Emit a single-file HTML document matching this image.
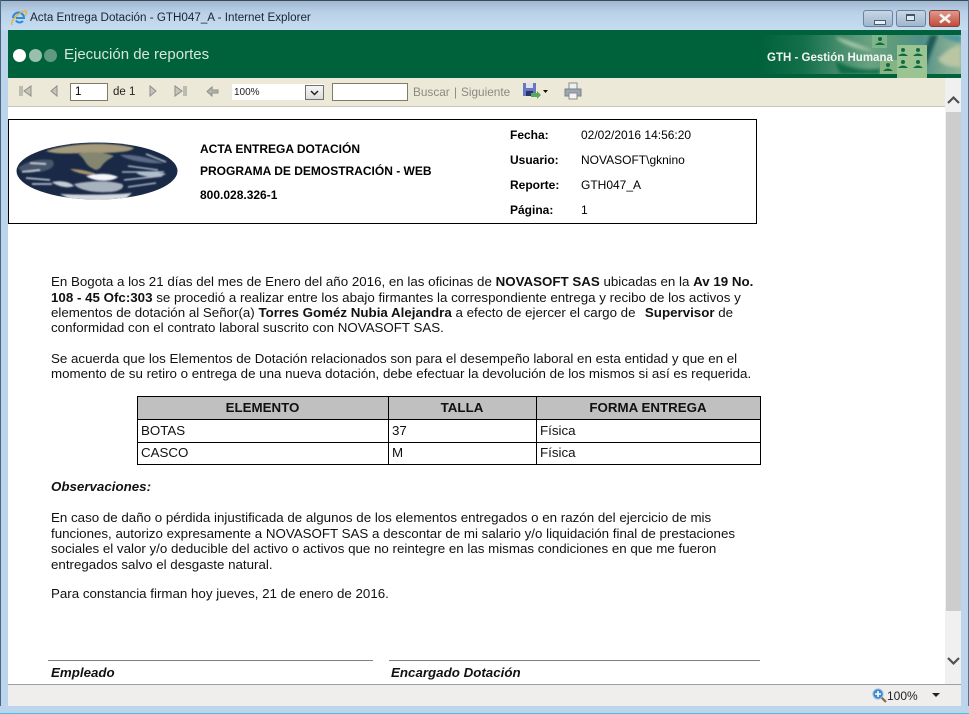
<!DOCTYPE html>
<html><head><meta charset="utf-8">
<style>
html,body{margin:0;padding:0;width:969px;height:714px;overflow:hidden;background:#fff}
body{position:relative;font-family:"Liberation Sans",Arial,sans-serif;color:#000}
.a{position:absolute}
.t{position:absolute;white-space:nowrap;line-height:16px}
.b{font-weight:bold}
.h{font-size:12px}
.p{font-size:13.33px;color:#111}
.g{font-size:11.8px;color:#8a8a80}
</style></head>
<body>
<!-- window frame -->
<div class="a" style="left:0;top:0;width:969px;height:30px;background:linear-gradient(#9db4cc,#b9d1e8 40%,#c6dcf0)"></div>
<div class="a" style="left:0;top:0;width:969px;height:1px;background:#3a4a58"></div>
<div class="a" style="left:0;top:30px;width:8px;height:684px;background:#bcd5ec"></div>
<div class="a" style="left:0;top:0;width:1px;height:714px;background:#4a6880"></div>
<div class="a" style="left:961px;top:30px;width:8px;height:684px;background:#bcd5ec"></div>
<div class="a" style="left:968px;top:0;width:1px;height:714px;background:#4a7890"></div>
<div class="a" style="left:0;top:706px;width:969px;height:8px;background:#bcd5ec"></div>
<div class="a" style="left:0;top:713px;width:969px;height:1px;background:#46c0e0"></div>

<!-- IE icon -->
<svg class="a" style="left:10px;top:9px" width="18" height="18" viewBox="0 0 18 18">
<path d="M3 9a5.500 5.500 0 0 1 11 0H6M6 11.500c1.500 2.500 5 2.500 7 .5" fill="none" stroke="#2f8ad8" stroke-width="2"/>
<path d="M2 16C0 12 9 3 15 2c2 0 2 2 0 5" fill="none" stroke="#e0b040" stroke-width="1.300"/>
</svg>
<div class="t" style="left:30px;top:10px;font-size:11.65px;color:#1a2530">Acta Entrega Dotación - GTH047_A - Internet Explorer</div>

<!-- window buttons -->
<div class="a" style="left:863px;top:10px;width:30px;height:17px;box-sizing:border-box;border:1px solid #6d8299;border-radius:3px;background:linear-gradient(#c6d6e6,#9fb6cc)"></div>
<div class="a" style="left:874px;top:20px;width:10px;height:3px;background:#e8f0f6;border:1px solid #4a5e72"></div>
<div class="a" style="left:896px;top:10px;width:30px;height:17px;box-sizing:border-box;border:1px solid #6d8299;border-radius:3px;background:linear-gradient(#c6d6e6,#9fb6cc)"></div>
<div class="a" style="left:906px;top:14px;width:9px;height:7px;box-sizing:border-box;border:1px solid #42566a;border-top-width:2px;background:#dce8f2"></div>
<div class="a" style="left:929px;top:10px;width:31px;height:17px;box-sizing:border-box;border:1px solid #8a4038;border-radius:3px;background:linear-gradient(#e09a8c,#c04c3c)"></div>
<svg class="a" style="left:938px;top:13px" width="14" height="11" viewBox="0 0 14 11"><path d="M2 1.500L12 9.500M12 1.500L2 9.500" stroke="#f4f4f4" stroke-width="2.600"/></svg>

<!-- green banner -->
<div class="a" style="left:8px;top:30px;width:953px;height:48px;background:#00623a;overflow:hidden">
  <div class="a" style="left:752px;top:5px;width:201px;height:39px;background:linear-gradient(90deg,#00623a 0,#14704a 22%,#4c9070 42%,#6aa283 55%,#5c9a7c 68%,#4f8f88 80%,#7da890 92%,#8fb49a 100%)"></div>
  <svg class="a" style="left:752px;top:5px" width="201" height="39" viewBox="0 0 201 39">
    <defs><filter id="bl"><feGaussianBlur stdDeviation="1.500"/></filter></defs>
    <g filter="url(#bl)">
      <path d="M75 2c15 3 30 10 38 14-14-1-30-6-38-14z" fill="#a4c4a8"/>
      <path d="M170 0l-10 28 6 3 12-31z" fill="#1f5a55"/>
      <path d="M178 24c8-8 16-14 23-14v22c-8 0-18 0-23-8z" fill="#b8c6a4"/>
      <path d="M75 26c16 8 30 10 46 8l-2 5H80z" fill="#0f6c44"/>
      <path d="M180 0h21v8c-8-2-16-4-21-8z" fill="#4a96a0"/>
    </g>
  </svg>
  <div class="a" style="left:864px;top:5px;width:15px;height:13px;background:#7fb38a"></div>
  <div class="a" style="left:889px;top:15px;width:30px;height:33px;background:#9cc492"></div>
  <div class="a" style="left:872px;top:30px;width:17px;height:14px;background:#86b583"></div>
  <svg class="a" style="left:860px;top:0" width="80" height="48" viewBox="0 0 80 48" fill="#0e6c44">
    <circle cx="12" cy="9" r="2"/><path d="M7 15q5-5 10 0z"/>
    <circle cx="35" cy="20" r="2"/><path d="M30 26q5-5 10 0z"/>
    <circle cx="50" cy="20" r="2"/><path d="M45 26q5-5 10 0z"/>
    <circle cx="35" cy="32" r="2"/><path d="M30 38q5-5 10 0z"/>
    <circle cx="50" cy="32" r="2"/><path d="M45 38q5-5 10 0z"/>
    <circle cx="20" cy="35" r="2"/><path d="M15 41q5-5 10 0z"/>
  </svg>
  <div class="a" style="left:5px;top:19px;width:13px;height:13px;border-radius:50%;background:#fff"></div>
  <div class="a" style="left:21px;top:19px;width:13px;height:13px;border-radius:50%;background:#99c0ac"></div>
  <div class="a" style="left:36px;top:19px;width:13px;height:13px;border-radius:50%;background:#609a80"></div>
  <div class="t" style="left:56px;top:17px;font-size:15px;color:#d6e6dc">Ejecución de reportes</div>
  <div class="t b" style="left:759px;top:20px;font-size:11.5px;color:#f2f6f2">GTH - Gestión Humana</div>
</div>

<!-- toolbar -->
<div class="a" style="left:8px;top:78px;width:953px;height:28px;background:#ece9d8;border-bottom:1px solid #c8c6ba"></div>
<svg class="a" style="left:8px;top:78px" width="230" height="28" viewBox="0 0 230 28" fill="#c4c4bc" stroke="#8e8e88" stroke-width="1">
  <path d="M12 8v10M14 8v10" fill="none"/><path d="M23 8v10l-7-5z"/>
  <path d="M49 8v10l-6-5z"/>
  <path d="M142 8v10l6-5z"/>
  <path d="M167 8v10l7-5z"/><path d="M176 8v10M178 8v10" fill="none"/>
  <path d="M204 9v3h6v3h-6v3l-5-4.500z" fill="#b4b8ac"/>
</svg>
<div class="a" style="left:70px;top:83px;width:38px;height:18px;box-sizing:border-box;border:1px solid #7f7d68;background:#fff;font-size:11.5px;line-height:16px;padding-left:4px">1</div>
<div class="t" style="left:113px;top:84px;font-size:11.5px;color:#222">de 1</div>
<div class="a" style="left:232px;top:84px;width:92px;height:16px;background:#fff"></div>
<div class="t" style="left:234px;top:85px;font-size:10px;color:#222">100%</div>
<div class="a" style="left:305px;top:85px;width:19px;height:15px;box-sizing:border-box;border:1px solid #707070;background:linear-gradient(#f6f6f6,#dcdcdc)"></div>
<svg class="a" style="left:309px;top:89px" width="11" height="8"><path d="M2 2l3.500 3.500L9 2" fill="none" stroke="#222" stroke-width="1.500"/></svg>
<div class="a" style="left:332px;top:83px;width:76px;height:18px;box-sizing:border-box;border:1px solid #7f7d68;background:#fff"></div>
<div class="t g" style="left:413px;top:84px">Buscar</div>
<div class="t g" style="left:454px;top:84px">|</div>
<div class="t g" style="left:461px;top:84px">Siguiente</div>
<svg class="a" style="left:522px;top:82px" width="28" height="18" viewBox="0 0 28 18">
  <path d="M1 1h13v13H1z" fill="#6a78c0"/><path d="M4 1h7v5H4z" fill="#dfe2f0"/><path d="M4 9h7v5H4z" fill="#2c3470"/>
  <path d="M9 11l6 0 0-2 4 4-4 4 0-2-6 0z" fill="#5aa858"/>
  <path d="M21 8h5l-2.500 3z" fill="#111"/>
</svg>
<svg class="a" style="left:564px;top:82px" width="18" height="18" viewBox="0 0 18 18">
  <path d="M5 1h8v6H5z" fill="#f0f0f0" stroke="#8a8a8a"/>
  <path d="M1 7h16v7H1z" fill="#9aa6b0" stroke="#78828c"/>
  <path d="M5 11h8v6H5z" fill="#f4f4f4" stroke="#8a8a8a"/>
</svg>

<!-- scrollbar -->
<div class="a" style="left:945px;top:78px;width:16px;height:607px;background:#f0f0f0"></div>
<div class="a" style="left:946px;top:112px;width:15px;height:499px;background:#cdcdcd"></div>
<svg class="a" style="left:946px;top:94px" width="15" height="12"><path d="M2 9l5.500-5.500L13 9" fill="none" stroke="#505050" stroke-width="2.200"/></svg>
<svg class="a" style="left:946px;top:655px" width="15" height="12"><path d="M2 3l5.500 5.500L13 3" fill="none" stroke="#505050" stroke-width="2.200"/></svg>

<!-- status bar -->
<div class="a" style="left:8px;top:684px;width:953px;height:1px;background:#a0a0a0"></div>
<div class="a" style="left:8px;top:685px;width:953px;height:21px;background:#f0eded"></div>
<svg class="a" style="left:872px;top:688px" width="15" height="15" viewBox="0 0 15 15">
  <path d="M9 9l5 5" stroke="#8a6a40" stroke-width="2.200"/><circle cx="6" cy="6" r="5" fill="#3c88d0" stroke="#8ab8e0"/>
  <path d="M3 6h6M6 3v6" stroke="#fff" stroke-width="1.600"/>
</svg>
<div class="t" style="left:887px;top:688px;font-size:12px;color:#222">100%</div>
<svg class="a" style="left:931px;top:692px" width="10" height="7"><path d="M1 1h8L5 5z" fill="#222"/></svg>

<!-- report header -->
<div class="a" style="left:8px;top:119px;width:749px;height:105px;box-sizing:border-box;border:1px solid #000"></div>
<svg class="a" style="left:16px;top:142px" width="163" height="58" viewBox="0 0 163 58">
  <defs><clipPath id="c"><ellipse cx="81" cy="29" rx="80.500" ry="28.500"/></clipPath>
  <filter id="gb"><feGaussianBlur stdDeviation=".7"/></filter></defs>
  <g clip-path="url(#c)">
    <rect width="163" height="58" fill="#1a2a46"/>
    <g filter="url(#gb)">
      <path d="M30 9c25-9 70-9 88-3-4 5-26 5-48 5-8 0-30 2-40-2z" fill="#a59a7c"/>
      <path d="M62 12c12-3 26-2 36 2-6 4-9 5-13 11-4 4-6 3-9 1-8-4-6-9-14-14z" fill="#85866f"/>
      <path d="M54 27c8 0 20 2 26 5-8 2-20-1-26-5z" fill="#a8946f"/>
      <path d="M2 26c8-6 20-10 34-8 6 6-4 12-16 12-8 2-14 0-18-4z" fill="#44566c"/>
      <path d="M14 21l16 1M6 30l18-2M10 36l24 2M16 42l20 0" stroke="#c8d0da" stroke-width="1.500" fill="none"/>
      <path d="M36 40c10-2 18 0 22 4-6 3-18 0-22-4z" fill="#c4ccd6"/>
      <path d="M70 34c12-3 24-3 32 1-6 5-24 5-32-1z" fill="#f4f6f8"/>
      <path d="M58 42c12-3 36-4 48 0 4 4-4 8-14 8-14 1-30-2-34-8z" fill="#a8b2be"/>
      <path d="M44 52c20 1 50 1 72-1l-8 7H56z" fill="#d2d8de"/>
      <path d="M104 13c14-1 30 3 44 8-10 1-34-1-44-8z" fill="#5a6c88"/>
      <path d="M112 24l30 4M106 30l42 0M108 38l38-4M112 45l28-4M130 12l20 8" stroke="#c4cedc" stroke-width="1.300" fill="none"/>
      <path d="M120 31c10-2 22-1 30 1-6 4-22 4-30-1z" fill="#aebccc"/>
    </g>
  </g>
</svg>
<div class="t h b" style="left:200px;top:141px">ACTA ENTREGA DOTACIÓN</div>
<div class="t h b" style="left:200px;top:163px">PROGRAMA DE DEMOSTRACIÓN - WEB</div>
<div class="t h b" style="left:200px;top:187px">800.028.326-1</div>
<div class="t h b" style="left:510px;top:127px">Fecha:</div>
<div class="t h" style="left:581px;top:127px">02/02/2016 14:56:20</div>
<div class="t h b" style="left:510px;top:152px">Usuario:</div>
<div class="t h" style="left:581px;top:152px">NOVASOFT\gknino</div>
<div class="t h b" style="left:510px;top:177px">Reporte:</div>
<div class="t h" style="left:581px;top:177px">GTH047_A</div>
<div class="t h b" style="left:510px;top:202px">Página:</div>
<div class="t h" style="left:581px;top:202px">1</div>

<!-- body paragraphs -->
<div class="t p" style="left:51px;top:274px">En Bogota a los 21 días del mes de Enero del año 2016, en las oficinas de <b>NOVASOFT SAS</b> ubicadas en la <b>Av 19 No.</b></div>
<div class="t p" style="left:51px;top:290px"><b>108 - 45 Ofc:303</b> se procedió a realizar entre los abajo firmantes la correspondiente entrega y recibo de los activos y</div>
<div class="t p" style="left:51px;top:305px">elementos de dotación al Señor(a) <b>Torres Goméz Nubia Alejandra</b> a efecto de ejercer el cargo de&nbsp; <b style="margin-left:2px">Supervisor</b> de</div>
<div class="t p" style="left:51px;top:320px">conformidad con el contrato laboral suscrito con NOVASOFT SAS.</div>
<div class="t p" style="left:51px;top:351px">Se acuerda que los Elementos de Dotación relacionados son para el desempeño laboral en esta entidad y que en el</div>
<div class="t p" style="left:51px;top:366px">momento de su retiro o entrega de una nueva dotación, debe efectuar la devolución de los mismos si así es requerida.</div>

<!-- table -->
<div class="a" style="left:137px;top:396px;width:624px;height:23px;background:#c0c0c0"></div>
<div class="a" style="left:137px;top:396px;width:624px;height:69px;box-sizing:border-box;border:1px solid #000"></div>
<div class="a" style="left:137px;top:419px;width:624px;height:1px;background:#000"></div>
<div class="a" style="left:137px;top:442px;width:624px;height:1px;background:#000"></div>
<div class="a" style="left:388px;top:396px;width:1px;height:69px;background:#000"></div>
<div class="a" style="left:536px;top:396px;width:1px;height:69px;background:#000"></div>
<div class="t p b" style="left:137px;width:251px;text-align:center;top:400px">ELEMENTO</div>
<div class="t p b" style="left:388px;width:148px;text-align:center;top:400px">TALLA</div>
<div class="t p b" style="left:536px;width:224px;text-align:center;top:400px">FORMA ENTREGA</div>
<div class="t p" style="left:141px;top:423px">BOTAS</div>
<div class="t p" style="left:392px;top:423px">37</div>
<div class="t p" style="left:540px;top:423px">Física</div>
<div class="t p" style="left:141px;top:445px">CASCO</div>
<div class="t p" style="left:392px;top:445px">M</div>
<div class="t p" style="left:540px;top:445px">Física</div>

<div class="t p" style="left:51px;top:479px;font-weight:bold;font-style:italic">Observaciones:</div>
<div class="t p" style="left:51px;top:510px">En caso de daño o pérdida injustificada de algunos de los elementos entregados o en razón del ejercicio de mis</div>
<div class="t p" style="left:51px;top:526px">funciones, autorizo expresamente a NOVASOFT SAS a descontar de mi salario y/o liquidación final de prestaciones</div>
<div class="t p" style="left:51px;top:541px">sociales el valor y/o deducible del activo o activos que no reintegre en las mismas condiciones en que me fueron</div>
<div class="t p" style="left:51px;top:557px">entregados salvo el desgaste natural.</div>
<div class="t p" style="left:51px;top:586px">Para constancia firman hoy jueves, 21 de enero de 2016.</div>

<!-- signatures -->
<div class="a" style="left:48px;top:660px;width:325px;height:1px;background:#808080"></div>
<div class="a" style="left:389px;top:660px;width:371px;height:1px;background:#808080"></div>
<div class="t p" style="left:51px;top:665px;font-weight:bold;font-style:italic">Empleado</div>
<div class="t p" style="left:391px;top:665px;font-weight:bold;font-style:italic">Encargado Dotación</div>
</body></html>
